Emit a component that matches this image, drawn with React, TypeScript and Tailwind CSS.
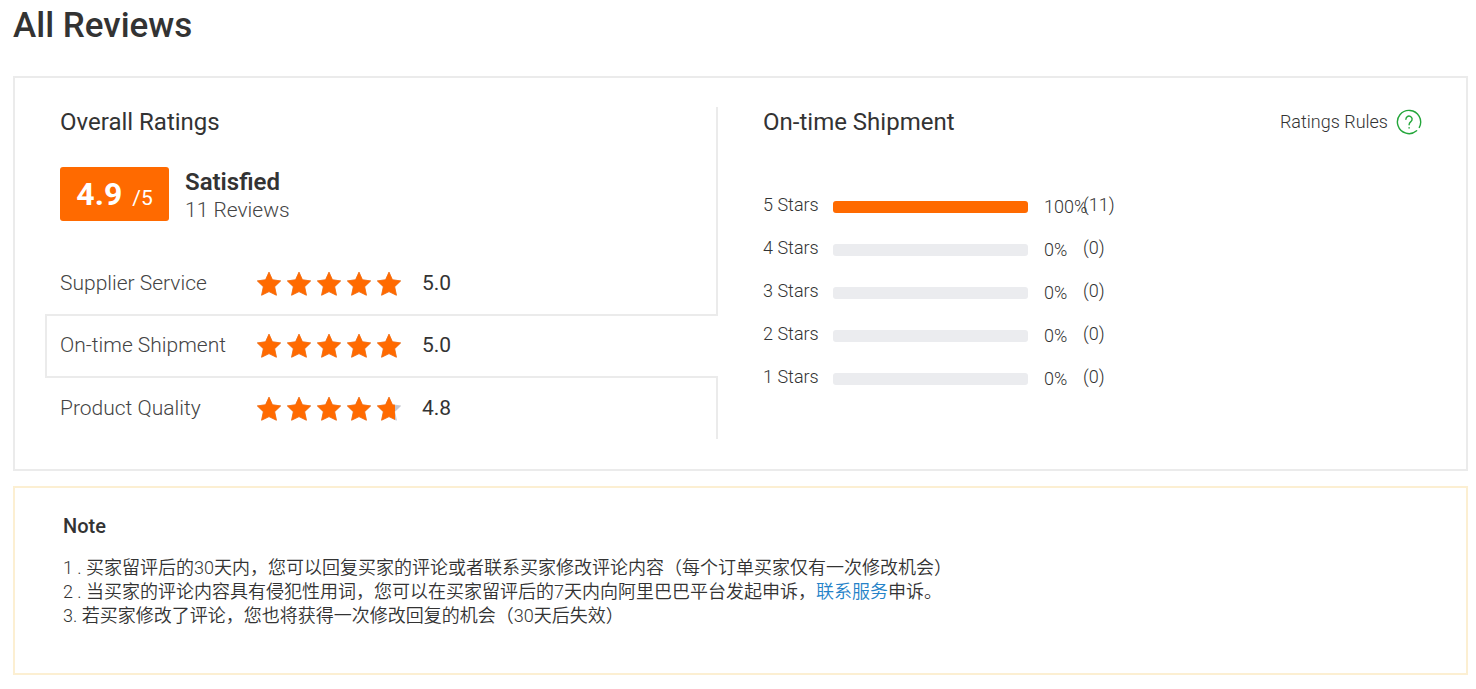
const SCORES = [
  { label: 'Supplier Service', value: 5 },
  { label: 'On-time Shipment', value: 5 },
  { label: 'Product Quality', value: 4.8 },
];

const BREAKDOWN = [
  { stars: 5, percent: 100, count: 11 },
  { stars: 4, percent: 0, count: 0 },
  { stars: 3, percent: 0, count: 0 },
  { stars: 2, percent: 0, count: 0 },
  { stars: 1, percent: 0, count: 0 },
];

const ACTIVE = 'On-time Shipment';

const STAR_PATH = 'M12 0.2 15.4 7.8 23.6 8.9 17.6 14.7 19.4 23.2 12 19.6 4.6 23.2 6.4 14.7 0.4 8.9 8.6 7.8Z';

function StarRow({ className }: { className: string }) {
  return (
    <span className={`flex w-[144px] gap-[6px] ${className}`}>
      {[1, 2, 3, 4, 5].map(n => (
        <svg key={n} viewBox="0 0 24 24" className="size-6 shrink-0" aria-hidden="true">
          <path d={STAR_PATH} fill="currentColor" stroke="currentColor" strokeWidth="0.8" strokeLinejoin="round" />
        </svg>
      ))}
    </span>
  );
}

function Stars({ value }: { value: number }) {
  return (
    <span className="relative block w-[144px]">
      <StarRow className="text-[#c4c6cf]" />
      <span className="absolute inset-y-0 left-0 overflow-hidden" style={{ width: `${(value / 5) * 100}%` }}>
        <StarRow className="text-[#ff6a00]" />
      </span>
    </span>
  );
}

function HelpIcon() {
  return (
    <svg viewBox="0 0 26 26" className="size-[26px]" fill="none" stroke="#23a63a" strokeWidth="1.4" strokeLinecap="round" aria-hidden="true">
      <path d="M20.6 21.8A11.6 11.6 0 1 1 23.3 18.4" />
      <path d="M9.9 10.2a3.1 3.1 0 1 1 5.1 2.3c-1 .8-1.9 1.4-1.9 3.2" />
      <path d="M13.1 18.6v.4" />
    </svg>
  );
}

function ScoreRow({ label, value }: { label: string; value: number }) {
  const active = label === ACTIVE;
  return (
    <button
      type="button"
      className={`flex w-full items-center border-[#ebebeb] text-left text-[21px] ${active ? 'h-16 border-y-2 border-l-2 pl-[13px]' : 'h-[61px] border-r-2 pl-[15px]'}`}
    >
      <span className="w-[197px] font-light text-[#444]">{label}</span>
      <Stars value={value} />
      <span className="pl-[21px]">{value.toFixed(1)}</span>
    </button>
  );
}

function OverallRatings() {
  return (
    <section className="pl-[30px]">
      <div className="border-r-2 border-[#ebebeb] pb-[29px] pl-[15px]">
        <h2 className="text-2xl leading-[30px]">Overall Ratings</h2>
        <div className="mt-[30px] flex items-start gap-4">
          <div className="flex h-[54px] w-[109px] items-baseline justify-center gap-[10px] rounded-[3px] bg-[#ff6a00] text-white">
            <span className="text-[32px] leading-[54px] font-bold">4.9</span>
            <span className="text-[21px]">/5</span>
          </div>
          <div className="pt-px">
            <p className="text-2xl leading-7 font-semibold">Satisfied</p>
            <p className="text-[21px] leading-7 font-light text-[#444]">11 Reviews</p>
          </div>
        </div>
      </div>
      {SCORES.map(score => (
        <ScoreRow key={score.label} {...score} />
      ))}
    </section>
  );
}

function Breakdown() {
  return (
    <section className="pr-11 pl-[45px]">
      <div className="flex items-center justify-between">
        <h2 className="text-2xl leading-[30px]">{ACTIVE}</h2>
        <a href="#rules" className="flex items-center gap-2 text-lg font-light">
          Ratings Rules
          <HelpIcon />
        </a>
      </div>
      <ul className="mt-[46px] text-lg font-light">
        {BREAKDOWN.map(row => (
          <li key={row.stars} className="flex h-[43px] items-center">
            <span className="w-[70px]">{row.stars} Stars</span>
            <span className="mt-1 h-3 w-[195px] overflow-hidden rounded-[3px] bg-[#ebecef]">
              <span className="block h-full bg-[#ff6a00]" style={{ width: `${row.percent}%` }} />
            </span>
            <span className="mt-1 ml-4 w-[39px] whitespace-nowrap">{row.percent}%</span>
            <span>({row.count})</span>
          </li>
        ))}
      </ul>
    </section>
  );
}

function Note() {
  return (
    <section className="mt-[15px] border-2 border-[#fcefd2] px-12 pt-6 pb-[45px]">
      <h3 className="text-xl leading-7 font-medium">Note</h3>
      <div lang="zh-CN" className="mt-4 text-lg leading-6 font-[350]">
        <p>1 . 买家留评后的30天内，您可以回复买家的评论或者联系买家修改评论内容（每个订单买家仅有一次修改机会）</p>
        <p>
          2 . 当买家的评论内容具有侵犯性用词，您可以在买家留评后的7天内向阿里巴巴平台发起申诉，
          <a href="#service" className="text-[#2482c8]">联系服务</a>申诉。
        </p>
        <p>3. 若买家修改了评论，您也将获得一次修改回复的机会（30天后失效）</p>
      </div>
    </section>
  );
}

export default function App() {
  return (
    <main className="min-h-screen bg-white pr-2 pb-[14px] pl-[13px] font-['Roboto','Noto_Sans_CJK_SC',sans-serif] text-[#333]">
      <h1 className="pt-[5px] text-[35px] leading-[42px] font-medium">All Reviews</h1>
      <div className="mt-[29px] grid grid-cols-[47fr_50fr] border-2 border-[#ebebeb] pt-[29px] pb-[30px]">
        <OverallRatings />
        <Breakdown />
      </div>
      <Note />
    </main>
  );
}
